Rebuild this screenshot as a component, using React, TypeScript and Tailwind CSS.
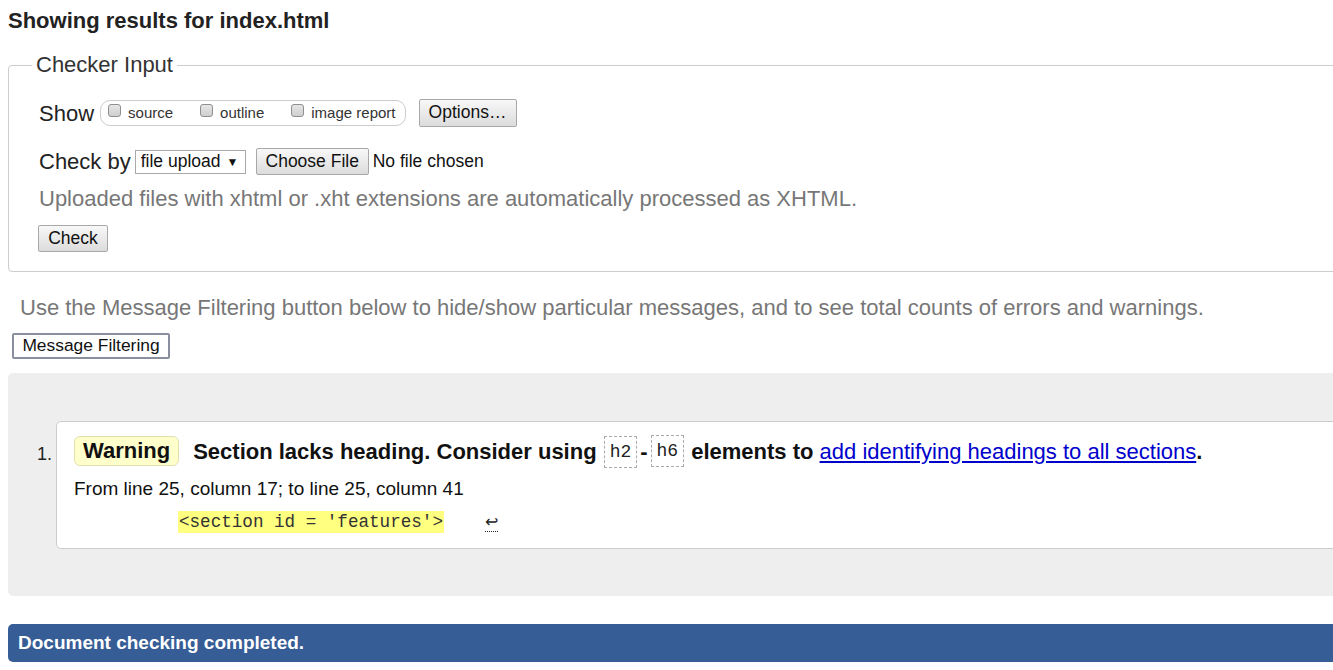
import React from "react"

// Sketch of a validator results page
const btn =
  "h-[27px] px-[8px] whitespace-nowrap text-[17.5px] leading-none text-[#111] border border-[#a8a8a8] rounded-[2px] bg-gradient-to-b from-[#f8f8f8] to-[#dcdcdc]"

function Box({ label }: { label: string }) {
  return (
    <label className="flex items-center gap-[7px]">
      <span className="relative -top-[3px] w-[13px] h-[13px] rounded-[3px] border border-[#8f8f8f] bg-gradient-to-b from-[#e6e6e6] to-[#cfcfcf]"></span>
      <span className="text-[15px] text-[#333]">{label}</span>
    </label>
  )
}

function Code({ children }: { children: React.ReactNode }) {
  return (
    <code className="inline-block h-[32px] px-[5px] leading-[30px] border border-dashed border-[#aaa] text-[18px] font-normal text-[#222] [font-family:'Liberation_Mono','DejaVu_Sans_Mono',monospace] align-middle">
      {children}
    </code>
  )
}

export default function App() {
  return (
    <div className="w-[1333px] h-[670px] overflow-hidden bg-white [font-family:'Liberation_Sans',Arial,sans-serif]">
      <div className="w-[1380px] px-2">
        <h2 className="pt-[9px] text-[22px] leading-[24px] font-bold text-[#222]">Showing results for index.html</h2>

        <fieldset className="mt-[20px] border border-[#cdcdcd] rounded-[4px] pl-[30px] pb-[19px]">
          <legend className="-ml-[7px] px-[4px] text-[22px] leading-[24px] text-[#333]">Checker Input</legend>

          <div className="mt-[22px] flex items-center h-[28px]">
            <span className="text-[22px] text-[#222] mr-[6px]">Show</span>
            <div className="flex items-center gap-[27px] h-[26px] pl-[7px] pr-[9px] border border-[#ccc] rounded-[10px]">
              <Box label="source" />
              <Box label="outline" />
              <Box label="image report" />
            </div>
            <button className={`${btn} ml-[13px] w-[98px] h-[28px]`}>Options…</button>
          </div>

          <div className="mt-[21px] flex items-center h-[27px]">
            <span className="text-[22px] text-[#222] mr-[4px]">Check by</span>
            <div className="h-[24px] w-[111px] px-[5px] flex items-center gap-[6px] border border-[#a9a9a9] bg-white text-[17.5px] text-[#111]">
              file upload <span className="text-[12px]">▼</span>
            </div>
            <button className={`${btn} ml-[10px] w-[113px]`}>Choose File</button>
            <span className="ml-[4px] text-[17.5px] text-[#111]">No file chosen</span>
          </div>

          <p className="mt-[12px] text-[22px] leading-[24px] text-[#777]">
            Uploaded files with xhtml or .xht extensions are automatically processed as XHTML.
          </p>

          <button className={`${btn} mt-[14px] -ml-px w-[70px]`}>Check</button>
        </fieldset>

        <p className="mt-[24px] pl-[12px] text-[22px] leading-[24px] text-[#777]">
          Use the Message Filtering button below to hide/show particular messages, and to see total counts of errors and warnings.
        </p>

        <button className="mt-[13px] ml-[4px] h-[26px] w-[158px] text-[17.4px] leading-none text-[#111] bg-white border-2 border-[#8a8fa0] rounded-[2px]">
          Message Filtering
        </button>

        <div className="mt-[14px] bg-[#eeeeee] rounded-[5px] pt-[48px] pb-[47px] pl-[48px]">
          <div className="relative bg-white border border-[#cccccc] rounded-[5px] pl-[17px] pt-[13px] pb-[14px]">
            <span className="absolute left-[-20px] top-[19px] text-[18px] text-[#222]">1.</span>
            <div className="flex items-center gap-[14px] h-[32px] text-[22px] font-bold text-[#111]">
              <span className="h-[30px] px-[8px] leading-[28px] bg-[#ffffcc] border border-[#e3e0b0] rounded-[6px]">Warning</span>
              <span className="flex items-center gap-[3px]">
                Section lacks heading. Consider using <span className="ml-[4px]"><Code>h2</Code></span>-<Code>h6</Code>
                <span className="ml-[4px]">
                  elements to{" "}
                  <a href="#" className="font-normal text-[#0000cc] underline">add identifying headings to all sections</a>.
                </span>
              </span>
            </div>
            <p className="mt-[12px] text-[19px] leading-[20px] text-[#111]">From line 25, column 17; to line 25, column 41</p>
            <div className="mt-[11px] flex items-center h-[24px] pl-[104px]">
              <code className="h-[22px] px-[1px] leading-[22px] bg-[#ffff80] text-[17.6px] text-[#333] [font-family:'Liberation_Mono','DejaVu_Sans_Mono',monospace] whitespace-pre">
                &lt;section id = 'features'&gt;
              </code>
              <span className="ml-[41px] text-[16px] leading-[18px] text-[#222] border-b border-dotted border-[#222]">↩</span>
            </div>
          </div>
        </div>

        <div className="mt-[28px] h-[38px] flex items-center pl-[10px] bg-[#365d95] rounded-[5px] text-[19px] font-bold text-white">
          Document checking completed.
        </div>
      </div>
    </div>
  )
}
